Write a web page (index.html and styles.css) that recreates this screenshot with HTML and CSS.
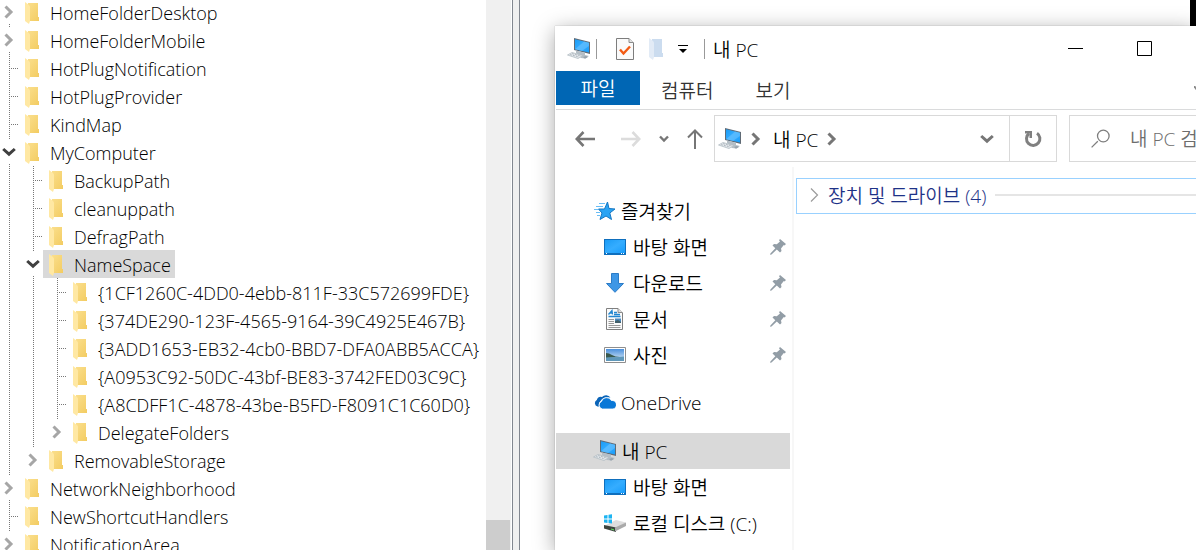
FILE: index.html
```
<!DOCTYPE html>
<html lang="ko">
<head>
    <meta charset="UTF-8">
    <meta name="viewport" content="width=device-width, initial-scale=1.0">
    <title>내 PC</title>
    <link rel="stylesheet" href="styles.css">
</head>
<body>
    <!-- 공용 아이콘 -->
    <svg class="sprite" aria-hidden="true">
        <defs>
            <linearGradient id="gold" x1="0" y1="0" x2="1" y2="1">
                <stop offset="0" stop-color="#fbe08f"/>
                <stop offset="1" stop-color="#f3cc62"/>
            </linearGradient>
            <linearGradient id="screen" x1="0" y1="0" x2="1" y2="1">
                <stop offset="0" stop-color="#1a9bf5"/>
                <stop offset="0.5" stop-color="#35adff"/>
                <stop offset="1" stop-color="#189cfb"/>
            </linearGradient>
            <linearGradient id="sky" x1="0" y1="0" x2="0" y2="1">
                <stop offset="0" stop-color="#4a8fdc"/>
                <stop offset="1" stop-color="#e3f1fa"/>
            </linearGradient>
            <symbol id="folder" viewBox="0 0 14 22">
                <path fill="url(#gold)" d="M1 1H13V15H14V19H3V1Z"/>
                <path fill="#ffe8a3" d="M0 0L4 3Q5 4 5 5V19L4 22L0 19Z"/>
            </symbol>
            <symbol id="right" viewBox="0 0 10 14">
                <path fill="none" stroke="currentColor" stroke-width="3" d="M1.5 1.5L7 7L1.5 12.5"/>
            </symbol>
            <symbol id="down" viewBox="0 0 14 10">
                <path fill="none" stroke="currentColor" stroke-width="3" d="M1.2 2L7 7.2L12.8 2"/>
            </symbol>
            <symbol id="pc" viewBox="0 0 24 22">
                <path fill="#5f6a75" d="M7 0L23 4V16L7 12Z"/>
                <path fill="url(#screen)" d="M8 1.3L22 4.8V14.6L8 11.2Z"/>
                <path fill="#78c8ff" opacity=".5" d="M8 11.2L17 3.5L22 4.8V8L15 12.9Z"/>
                <path fill="#b4bec6" d="M9 12.5L18 14.8V17L22 18L18 20.500L14 20L12 18L9 15Z"/>
                <path fill="#e6eaed" stroke="#b3bcc3" stroke-width=".8" d="M.5 17L5 14.5L16 17.5L11 20.5Z"/>
                <path fill="none" stroke="#a3adb6" stroke-width=".8" stroke-dasharray="2 1" d="M3 16.6L12 19M5 15.6L14 18"/>
                <path fill="#98a3ac" d="M16 19L19 18L21 19L18 20.8Z"/>
            </symbol>
            <symbol id="desktop" viewBox="0 0 22 16">
                <path fill="#0f6fbd" d="M0 0H22V16H0Z"/>
                <path fill="url(#screen)" d="M1 1H21V14H1Z"/>
                <path fill="#fff" d="M2 14h1v1h-1zM17 14h1v1h-1zM19 14h1v1h-1z"/>
            </symbol>
            <symbol id="pin" viewBox="0 0 16 16">
                <path fill="#929da6" d="M10 0L16 5L14.5 6.5L13.8 6L11 9.5L11.5 12L10 13.5L6.8 10.6L1.5 15.5L0 15.8L.4 14.5L5.3 9.3L2.5 6.5L4 5L6.8 5.2L10 2.4L9 1.3Z"/>
            </symbol>
        </defs>
    </svg>

    <div class="desktop">
        <aside class="registry">
            <ul class="tree">
                <li><div class="row"><button class="twisty" aria-label="펼치기"><svg width="10" height="14"><use href="#right"/></svg></button><span class="key"><svg width="14" height="22"><use href="#folder"/></svg>HomeFolderDesktop</span></div></li>
                <li><div class="row"><button class="twisty" aria-label="펼치기"><svg width="10" height="14"><use href="#right"/></svg></button><span class="key"><svg width="14" height="22"><use href="#folder"/></svg>HomeFolderMobile</span></div></li>
                <li><div class="row leaf"><span class="key"><svg width="14" height="22"><use href="#folder"/></svg>HotPlugNotification</span></div></li>
                <li><div class="row leaf"><span class="key"><svg width="14" height="22"><use href="#folder"/></svg>HotPlugProvider</span></div></li>
                <li><div class="row leaf"><span class="key"><svg width="14" height="22"><use href="#folder"/></svg>KindMap</span></div></li>
                <li>
                    <div class="row"><button class="twisty open" aria-label="접기"><svg width="14" height="10"><use href="#down"/></svg></button><span class="key"><svg width="14" height="22"><use href="#folder"/></svg>MyComputer</span></div>
                    <ul>
                        <li><div class="row leaf"><span class="key"><svg width="14" height="22"><use href="#folder"/></svg>BackupPath</span></div></li>
                        <li><div class="row leaf"><span class="key"><svg width="14" height="22"><use href="#folder"/></svg>cleanuppath</span></div></li>
                        <li><div class="row leaf"><span class="key"><svg width="14" height="22"><use href="#folder"/></svg>DefragPath</span></div></li>
                        <li>
                            <div class="row"><button class="twisty open" aria-label="접기"><svg width="14" height="10"><use href="#down"/></svg></button><span class="key selected"><svg width="14" height="22"><use href="#folder"/></svg>NameSpace</span></div>
                            <ul>
                                <li><div class="row leaf"><span class="key"><svg width="14" height="22"><use href="#folder"/></svg>{1CF1260C-4DD0-4ebb-811F-33C572699FDE}</span></div></li>
                                <li><div class="row leaf"><span class="key"><svg width="14" height="22"><use href="#folder"/></svg>{374DE290-123F-4565-9164-39C4925E467B}</span></div></li>
                                <li><div class="row leaf"><span class="key"><svg width="14" height="22"><use href="#folder"/></svg>{3ADD1653-EB32-4cb0-BBD7-DFA0ABB5ACCA}</span></div></li>
                                <li><div class="row leaf"><span class="key"><svg width="14" height="22"><use href="#folder"/></svg>{A0953C92-50DC-43bf-BE83-3742FED03C9C}</span></div></li>
                                <li><div class="row leaf"><span class="key"><svg width="14" height="22"><use href="#folder"/></svg>{A8CDFF1C-4878-43be-B5FD-F8091C1C60D0}</span></div></li>
                                <li><div class="row"><button class="twisty" aria-label="펼치기"><svg width="10" height="14"><use href="#right"/></svg></button><span class="key"><svg width="14" height="22"><use href="#folder"/></svg>DelegateFolders</span></div></li>
                            </ul>
                        </li>
                        <li><div class="row"><button class="twisty" aria-label="펼치기"><svg width="10" height="14"><use href="#right"/></svg></button><span class="key"><svg width="14" height="22"><use href="#folder"/></svg>RemovableStorage</span></div></li>
                    </ul>
                </li>
                <li><div class="row"><button class="twisty" aria-label="펼치기"><svg width="10" height="14"><use href="#right"/></svg></button><span class="key"><svg width="14" height="22"><use href="#folder"/></svg>NetworkNeighborhood</span></div></li>
                <li><div class="row leaf"><span class="key"><svg width="14" height="22"><use href="#folder"/></svg>NewShortcutHandlers</span></div></li>
                <li><div class="row"><button class="twisty" aria-label="펼치기"><svg width="10" height="14"><use href="#right"/></svg></button><span class="key"><svg width="14" height="22"><use href="#folder"/></svg>NotificationArea</span></div></li>
            </ul>
            <div class="scrollbar"><div class="thumb"></div></div>
        </aside>
        <div class="splitter"></div>
        <div class="values"></div>
    </div>

    <main class="explorer">
        <header class="titlebar">
            <svg class="app-icon" width="24" height="22"><use href="#pc"/></svg>
            <span class="sep"></span>
            <button class="quick props" aria-label="속성">
                <svg width="18" height="22" viewBox="0 0 18 22">
                    <path fill="#fafafa" stroke="#7d7d7d" d="M.5.5H13L17.5 5V21.5H.5Z"/>
                    <path fill="#e3e3e3" stroke="#8b8b8b" d="M13 .5V4.5H17.5"/>
                    <path fill="none" stroke="#f25a13" stroke-width="2.4" d="M4 11.5L7.5 15.5L14 8.5"/>
                </svg>
            </button>
            <button class="quick" aria-label="새 폴더">
                <svg width="14" height="22" viewBox="0 0 14 22">
                    <path fill="#cbdcef" d="M1 1H13V15H14V19H3V1Z"/>
                    <path fill="#e2ebf6" d="M0 0L4 3Q5 4 5 5V19L4 22L0 19Z"/>
                </svg>
            </button>
            <button class="quick more" aria-label="빠른 실행 도구 모음 사용자 지정">
                <svg width="10" height="8" viewBox="0 0 10 8"><path d="M0 0H10V1H0ZM1 4H9L5 8Z"/></svg>
            </button>
            <span class="sep"></span>
            <h1>내 PC</h1>
            <button class="caption" aria-label="최소화">
                <svg width="15" height="15" viewBox="0 0 15 15"><path d="M0 7H15V8H0Z"/></svg>
            </button>
            <button class="caption" aria-label="최대화">
                <svg width="15" height="15" viewBox="0 0 15 15"><path fill="none" stroke="#000" d="M.5.5H14.5V14.5H.5Z"/></svg>
            </button>
        </header>

        <nav class="ribbon">
            <button class="file">파일</button>
            <button>컴퓨터</button>
            <button>보기</button>
            <span class="expand"><svg width="2" height="4" viewBox="0 0 2 4"><path fill="none" stroke="#8a8a8a" stroke-width="2" d="M0 0L4 5"/></svg></span>
        </nav>

        <div class="navbar">
            <button class="back" aria-label="뒤로">
                <svg width="20" height="16" viewBox="0 0 20 16"><path fill="none" stroke="#767676" stroke-width="2.6" d="M8.5 1L1.8 8L8.5 15M2 8H20"/></svg>
            </button>
            <button class="forward" aria-label="앞으로">
                <svg width="20" height="16" viewBox="0 0 20 16"><path fill="none" stroke="#dcdcdc" stroke-width="2.6" d="M11.5 1L18.2 8L11.5 15M18 8H0"/></svg>
            </button>
            <button class="recent" aria-label="최근 위치">
                <svg width="10" height="8" viewBox="0 0 10 8"><path fill="none" stroke="#767676" stroke-width="2.4" d="M1 1.5L5 5.5L9 1.5"/></svg>
            </button>
            <button class="up" aria-label="위로">
                <svg width="16" height="20" viewBox="0 0 16 20"><path fill="none" stroke="#767676" stroke-width="2" d="M1 8.5L8 1.5L15 8.5M8 2V20"/></svg>
            </button>
            <div class="address">
                <svg width="24" height="22"><use href="#pc"/></svg>
                <svg class="crumb-arrow" width="10" height="14"><use href="#right"/></svg>
                <span>내 PC</span>
                <svg class="crumb-arrow" width="10" height="14"><use href="#right"/></svg>
                <button class="history" aria-label="이전 위치"><svg width="14" height="10"><use href="#down"/></svg></button>
                <button class="refresh" aria-label="새로 고침">
                    <svg width="18" height="18" viewBox="0 0 18 18">
                        <path fill="none" stroke="#808080" stroke-width="3" d="M13 3.2A6.7 6.7 0 1 1 5 3.5"/>
                        <path fill="#808080" d="M1 1H8V8H5.5V3.5H1Z"/>
                    </svg>
                </button>
            </div>
            <label class="search">
                <svg width="19" height="19" viewBox="0 0 19 19"><path fill="none" stroke="#7e7e7e" stroke-width="1.3" d="M6.8 12.2L.6 18.4M6.5 7a5.8 5.8 0 1 1 11.6 0a5.8 5.8 0 1 1-11.6 0"/></svg>
                <input type="text" placeholder="내 PC 검색" aria-label="내 PC 검색">
            </label>
        </div>

        <div class="content">
            <nav class="places">
                <ul>
                    <li><a href="#">
                        <svg width="22" height="20" viewBox="0 0 22 20">
                            <path fill="#2aa4f4" stroke="#1577c2" d="M13.5 1L15 7.5L21 8L15.8 12L17.5 18.5L12 15L6 18.5L8 12L4.5 8H10.5Z"/>
                            <path stroke="#69bdf5" d="M5 2.5H11M2 5.5H9M0 8.5H4M2 11.5H6M3 14.5H6"/>
                        </svg>즐겨찾기</a></li>
                    <li class="sub"><a href="#"><svg width="22" height="16"><use href="#desktop"/></svg>바탕 화면<svg class="pin" width="16" height="16"><use href="#pin"/></svg></a></li>
                    <li class="sub"><a href="#">
                        <svg width="22" height="20" viewBox="0 0 22 20"><path fill="#3e97e6" stroke="#2c7cc7" d="M7.5.5H14.5V10.5H19.5L11 19.3L2.5 10.5H7.5Z"/></svg>다운로드<svg class="pin" width="16" height="16"><use href="#pin"/></svg></a></li>
                    <li class="sub"><a href="#">
                        <svg width="22" height="22" viewBox="0 0 22 22">
                            <path fill="#fbfbfb" stroke="#7f7f7f" d="M2.5.5H14L18.5 5V21.5H2.5Z"/>
                            <path fill="#ddd" stroke="#8b8b8b" d="M14 .5V4.5H18.5"/>
                            <path fill="none" stroke="#2286d0" stroke-width="1.3" d="M4.5 6.5L8 2.5L8.5 6.5M6 5H8.5M10 4.5H13M10 6.5H16M4.5 8.5H16.5"/>
                            <path stroke="#999" d="M4.5 11.5H10M4.5 13.5H10M4.5 15.5H10M4.5 17.5H16.5M4.5 19.5H16.5"/>
                            <path fill="#4b88bd" d="M11 10.5H17V15H11Z"/><path fill="#42606a" d="M11 13L14 12L17 14V15H11Z"/>
                        </svg>문서<svg class="pin" width="16" height="16"><use href="#pin"/></svg></a></li>
                    <li class="sub"><a href="#">
                        <svg width="22" height="16" viewBox="0 0 22 16">
                            <path fill="#fff" stroke="#8e8e8e" d="M.5.5H21.5V15.5H.5Z"/>
                            <path fill="url(#sky)" d="M2 2H20V14H2Z"/>
                            <path fill="#39594d" d="M2 6Q5 6 8 8T16 10L2 11Z"/>
                            <path fill="#5f98ba" d="M2 10.5L15 10L20 9.5V14H2Z"/>
                        </svg>사진<svg class="pin" width="16" height="16"><use href="#pin"/></svg></a></li>
                </ul>
                <ul>
                    <li><a href="#">
                        <svg width="22" height="20" viewBox="0 0 22 20">
                            <path fill="#0a64b8" d="M5 13.5H3.5A3.5 3.5 0 0 1 2.8 7A4.5 4.5 0 0 1 8 4A5.5 5.5 0 0 1 16.5 4.5Q9 3 6.5 8Q4 9.500 5 13.500Z"/>
                            <path fill="#0a78d7" stroke="#fff" stroke-width=".8" d="M8.500 16A4 4 0 0 1 7.500 8.400A5.300 5.300 0 0 1 17.300 7.500A4.200 4.200 0 0 1 19 16Z"/>
                        </svg>OneDrive</a></li>
                </ul>
                <ul>
                    <li><a href="#" class="current"><svg width="24" height="22"><use href="#pc"/></svg>내 PC</a></li>
                    <li class="sub"><a href="#"><svg width="22" height="16"><use href="#desktop"/></svg>바탕 화면</a></li>
                    <li class="sub"><a href="#">
                        <svg width="22" height="18" viewBox="0 0 22 18">
                            <path fill="#1cb4f2" d="M0 1.500L3.500 1V4.500H0ZM4.500 .8L8 .3V4.500H4.500ZM0 5.500H3.500V9L0 8.500Z"/>
                            <path fill="#dedede" d="M1 11.500L12 6L22 8.500L12 14Z"/>
                            <path fill="#1cb4f2" d="M4.500 5.500H8V9.500L4.500 9Z"/>
                            <path fill="#3d4540" d="M0 11L12 13.500V18L0 14.500Z"/>
                            <path fill="#aaa" d="M11 13.500L22 8.500V12L11 17.500Z"/>
                            <path fill="#5ed75a" d="M7 14.500L10 15.200V16.400L7 15.600Z"/>
                        </svg>로컬 디스크 (C:)</a></li>
                </ul>
            </nav>
            <section class="files">
                <button class="group">
                    <svg width="9" height="14" viewBox="0 0 9 14"><path fill="none" stroke="#9b9b9b" stroke-width="1.2" d="M1 .5L7.500 7L1 13.500"/></svg>
                    <span>장치 및 드라이브 (4)</span>
                    <span class="rule"></span>
                </button>
            </section>
        </div>
    </main>
</body>
</html>
```
FILE: styles.css
```
* {
    box-sizing: border-box;
}

body {
    margin: 0;
    height: 100vh;
    overflow: hidden;
    position: relative;
    background: #fff;
    color: #000;
    font-family: "Open Sans", "Noto Sans CJK KR", sans-serif;
    font-size: 18px;
    font-weight: 350;
}

button {
    display: flex;
    align-items: center;
    justify-content: center;
    padding: 0;
    border: none;
    background: none;
    color: inherit;
    font: inherit;
    cursor: pointer;
}

ul {
    margin: 0;
    padding: 0;
    list-style: none;
}

svg {
    flex: none;
}

.sprite {
    position: absolute;
    width: 0;
    height: 0;
}

.desktop {
    display: flex;
    height: 100%;
    padding-right: 6px;
    background: #000;
}

/* 레지스트리 트리 */
.registry {
    display: flex;
    flex: 0 0 512px;
    overflow: hidden;
    background: #fff;
}

.tree {
    flex: 1;
    min-width: 0;
    margin-top: -2px;
}

.tree ul {
    padding-left: 24px;
}

.tree li {
    background: repeating-linear-gradient(#777 0 1px, transparent 1px 2px) 9px 0 / 1px 100% no-repeat;
}

.tree ul li:last-child {
    background-size: 1px 2px;
}

.row {
    display: flex;
    align-items: center;
    height: 28px;
    white-space: nowrap;
}

.leaf::before {
    content: "";
    flex: none;
    width: 10px;
    height: 1px;
    margin-left: 9px;
    background: repeating-linear-gradient(90deg, #777 0 1px, transparent 1px 2px);
}

.twisty {
    width: 19px;
    height: 24px;
    padding-right: 2px;
    background: #fff;
    color: #a6a6a6;
}

.twisty.open {
    color: #404040;
}

.key {
    display: flex;
    flex: none;
    align-items: center;
    gap: 11px;
    height: 28px;
    padding: 2px 4px 0 6px;
}

.key.selected {
    background: #d9d9d9;
}

.scrollbar {
    display: flex;
    flex: 0 0 25px;
    align-items: flex-end;
    margin-right: 1px;
    background: #f0f0f0;
}

.thumb {
    width: 24px;
    height: 30px;
    background: #cdcdcd;
}

.splitter {
    flex: 0 0 8px;
    border: solid #828790;
    border-width: 0 1px;
    background: #f0f0f0;
}

.values {
    flex: 1;
    background: #fff;
}

/* 탐색기 창 */
.explorer {
    position: absolute;
    top: 26px;
    right: 0;
    bottom: 0;
    left: 555px;
    display: flex;
    flex-direction: column;
    padding-left: 1px;
    background: #fff;
    box-shadow: 0 0 1px rgba(0, 0, 0, 0.3), 0 4px 20px rgba(0, 0, 0, 0.35);
    font-size: 19px;
}

.titlebar {
    display: flex;
    align-items: center;
    height: 45px;
    padding: 0 17px 0 11px;
}

.sep {
    width: 1px;
    height: 20px;
    margin: 0 8px 0 5px;
    background: #999;
}

.quick {
    margin-right: 15px;
}

.props {
    margin-left: 11px;
}

.more {
    margin-right: 11px;
}

.titlebar h1 {
    flex: 1;
    margin: 0;
    font-size: 19px;
    font-weight: 350;
}

.caption {
    width: 69px;
    height: 45px;
}

.ribbon {
    display: flex;
    height: 39px;
    border-bottom: 1px solid #dadbdc;
    color: #333;
}

.ribbon button {
    height: 38px;
    padding: 0 21px;
}

.ribbon .file {
    width: 84px;
    height: 34px;
    background: #0066b4;
    color: #fff;
}

.expand {
    display: flex;
    margin: 15px 0 0 auto;
}

.navbar {
    display: flex;
    align-items: center;
    height: 57px;
    padding-left: 19px;
}

.forward {
    margin-left: 26px;
}

.recent {
    margin-left: 18px;
}

.up {
    margin: 0 11px 0 18px;
}

.address {
    display: flex;
    flex: 1;
    align-items: center;
    height: 47px;
    margin-right: 12px;
    padding-left: 3px;
    border: 1px solid #d9d9d9;
}

.crumb-arrow {
    margin: 0 12px 0 9px;
    color: #767676;
}

.history {
    width: 44px;
    height: 100%;
    margin-left: auto;
    color: #767676;
}

.refresh {
    width: 47px;
    height: 100%;
    border-left: 1px solid #d9d9d9;
}

.search {
    display: flex;
    flex: 0 0 127px;
    align-items: center;
    gap: 20px;
    height: 47px;
    padding-left: 21px;
    overflow: hidden;
    border: 1px solid #d9d9d9;
    border-right: none;
}

.search input {
    flex: none;
    width: 120px;
    padding: 0;
    border: none;
    outline: none;
    background: none;
    font: inherit;
}

.search input::placeholder {
    color: #6d6d6d;
}

.content {
    display: flex;
    flex: 1;
    min-height: 0;
}

.places {
    display: flex;
    flex: 0 0 238px;
    flex-direction: column;
    gap: 12px;
    padding: 26px 2px 0 0;
    overflow: hidden;
    border-right: 2px solid #f7f7f7;
}

.places a {
    display: flex;
    align-items: center;
    gap: 5px;
    height: 36px;
    padding-left: 38px;
    color: #000;
    text-decoration: none;
}

.places .sub a {
    gap: 7px;
    padding-left: 48px;
}

.places a.current {
    padding-left: 37px;
    background: #d9d9d9;
}

.pin {
    margin: 0 4px 0 auto;
}

.files {
    flex: 1;
    padding: 11px 0 0 2px;
}

.group {
    width: 100%;
    height: 36px;
    gap: 9px;
    padding: 0 0 2px 13px;
    border: 1px solid #99d1ff;
    border-right: none;
    color: #1e3287;
}

.rule {
    flex: 1;
    height: 2px;
    background: #e5e5e5;
}
```
